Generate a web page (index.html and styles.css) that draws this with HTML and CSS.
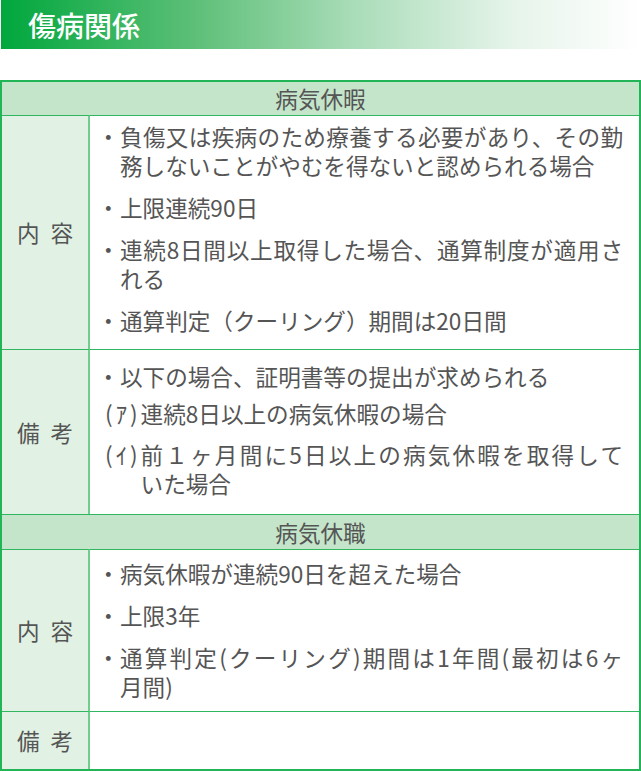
FILE: index.html
```html
<!DOCTYPE html>
<html lang="ja">
<head>
<meta charset="utf-8">
<link rel="stylesheet" href="styles.css">
</head>
<body>
<div class="title-bar"><h1 class="title">傷病関係</h1></div>
<div class="leave">
  <div class="sec h1">病気休暇</div>
  <div class="label r1">内 容</div>
  <div class="body r1 b1">
    <ul class="list">
      <li><span class="mk">・</span><span class="tx"><span class="jl">負傷又は疾病のため療養する必要があり、その勤</span>務しないことがやむを得ないと認められる場合</span></li>
      <li><span class="mk">・</span><span class="tx">上限連続90日</span></li>
      <li><span class="mk">・</span><span class="tx"><span class="jl">連続8日間以上取得した場合、通算制度が適用さ</span>れる</span></li>
      <li><span class="mk">・</span><span class="tx">通算判定（クーリング）期間は20日間</span></li>
    </ul>
  </div>
  <div class="label r2">備 考</div>
  <div class="body r2 b2">
    <ul class="list">
      <li class="tight"><span class="mk">・</span><span class="tx">以下の場合、証明書等の提出が求められる</span></li>
      <li class="mid"><span class="mk2">(ｱ)</span><span class="tx">連続8日以上の病気休暇の場合</span></li>
      <li><span class="mk2">(ｲ)</span><span class="tx"><span class="jl">前１ヶ月間に5日以上の病気休暇を取得して</span>いた場合</span></li>
    </ul>
  </div>
  <div class="sec h2">病気休職</div>
  <div class="label r3">内 容</div>
  <div class="body r3 b3">
    <ul class="list">
      <li><span class="mk">・</span><span class="tx">病気休暇が連続90日を超えた場合</span></li>
      <li><span class="mk">・</span><span class="tx">上限3年</span></li>
      <li><span class="mk">・</span><span class="tx"><span class="jl">通算判定(クーリング)期間は1年間(最初は6ヶ</span>月間)</span></li>
    </ul>
  </div>
  <div class="label r4">備 考</div>
  <div class="body r4"></div>
</div>
</body>
</html>
```
FILE: styles.css
```css
html, body {
  margin: 0;
  padding: 0;
  background: #ffffff;
}
body {
  width: 641px;
  font-family: "Noto Sans CJK JP", "Noto Sans", sans-serif;
  color: #555555;
}
.title-bar {
  height: 49px;
  margin-left: 1px;
  background: linear-gradient(to right, #00a73d 0%, #5cbf77 30%, #a9dcb8 55%, #e6f4ea 80%, #ffffff 100%);
  display: flex;
  align-items: center;
}
.title {
  margin: 0 0 0 27px;
  font-size: 28px;
  font-weight: 500;
  color: #ffffff;
  line-height: 1;
}
.leave {
  margin-top: 31px;
  width: 641px;
  box-sizing: border-box;
  border: 2px solid #22b557;
  display: grid;
  grid-template-columns: 88px 1fr;
  grid-template-rows: 33px 234px 165px 35px 162px 58px;
  font-size: 22.6px;
  line-height: 29px;
}
.sec {
  grid-column: 1 / 3;
  background: #c4e5ca;
  display: flex;
  align-items: center;
  justify-content: center;
}
.h2, .r1, .r2, .r3, .r4 {
  border-top: 1px solid #2fb65e;
}
.label {
  background: #e1f1e4;
  border-right: 2px solid #72cc8e;
  display: flex;
  align-items: center;
  justify-content: center;
  white-space: pre;
  word-spacing: 6px;
}
.body {
  background: #ffffff;
}
.list {
  list-style: none;
  margin: 0;
  padding: 0 16px 0 7px;
}
.list li {
  display: flex;
  margin-bottom: 13px;
}
.list li.tight {
  margin-bottom: 8px;
}
.list li.mid {
  margin-bottom: 12px;
}
.mk {
  flex: 0 0 23px;
}
.mk2 {
  flex: 0 0 43px;
  box-sizing: border-box;
  padding-left: 8px;
  letter-spacing: 3px;
}
.tx {
  flex: 1;
  min-width: 0;
  white-space: nowrap;
}
.jl {
  display: block;
  text-align: justify;
  text-align-last: justify;
}
.b1 { padding-top: 6px; }
.b2 { padding-top: 12px; }
.b3 { padding-top: 9px; }
```
